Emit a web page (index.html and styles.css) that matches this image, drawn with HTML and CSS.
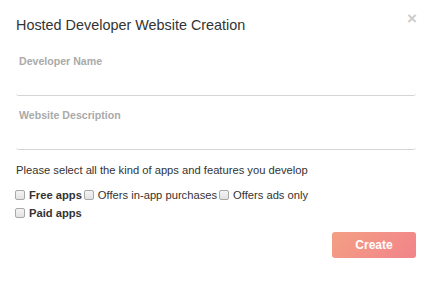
FILE: index.html
```html
<!DOCTYPE html>
<html lang="en">
<head>
    <meta charset="UTF-8">
    <meta name="viewport" content="width=device-width, initial-scale=1.0">
    <title>Hosted Developer Website Creation</title>
    <link rel="stylesheet" href="styles.css">
</head>
<body>
<div class="modal">
    <div class="modal-header">
        <p class="title">Hosted Developer Website Creation</p>
        <span class="close">&times;</span>
    </div>
    <form class="siteForm">
        <input type="text" class="field" placeholder="Developer Name">
        <input type="text" class="field" placeholder="Website Description">
        <p class="hint">Please select all the kind of apps and features you develop</p>
        <div class="options">
            <div class="row">
                <label class="opt strong"><input type="checkbox"> Free apps</label>
                <label class="opt"><input type="checkbox"> Offers in-app purchases</label>
                <label class="opt"><input type="checkbox"> Offers ads only</label>
            </div>
            <div class="row">
                <label class="opt strong"><input type="checkbox"> Paid apps</label>
            </div>
        </div>
        <div class="actions">
            <button type="submit" class="create">Create</button>
        </div>
    </form>
</div>
</body>
</html>
```

FILE: styles.css
```css
/* Global Reset */
* {
  box-sizing: border-box;
  margin: 0;
  padding: 0;
}

body {
  font-family: Arial, 'Liberation Sans', Helvetica, sans-serif;
  background: #fff;
  color: #333;
}

/* Modal */
.modal {
  width: 429px;
  padding: 15px 13px 0 16px;
}

.modal-header {
  display: flex;
  justify-content: space-between;
  align-items: flex-start;
  height: 30px;
}

.modal-header .title {
  font-size: 14.4px;
  line-height: 20px;
  color: #333;
}

.modal-header .close {
  font-size: 17px;
  line-height: 10px;
  font-weight: bold;
  color: #ccc;
  margin-right: -1px;
  margin-top: -1px;
}

/* Inputs */
.siteForm {
  display: flex;
  flex-direction: column;
}

.field {
  display: block;
  width: 100%;
  height: 51px;
  padding: 9px 3px 28px;
  border: none;
  border-bottom: 1px solid #d4d4d4;
  border-radius: 0 0 3px 3px;
  margin-bottom: 3px;
  font-family: inherit;
  font-size: 10.6px;
  font-weight: bold;
  line-height: 14px;
  color: #333;
  outline: none;
}

.field::placeholder {
  color: #aaa;
}

/* Checkboxes */
.hint {
  font-size: 11.2px;
  line-height: 14px;
  margin-top: 10px;
}

.options {
  margin-top: 9px;
}

.row {
  display: flex;
  gap: 3px;
}

.opt {
  font-size: 11.2px;
  line-height: 18px;
  display: flex;
  align-items: center;
  gap: 4px;
}

.opt.strong {
  font-weight: bold;
}

.opt input {
  appearance: none;
  width: 10px;
  height: 10px;
  margin-left: -1px;
  border: 1px solid #a8a8a8;
  border-radius: 2px;
  background: linear-gradient(#f4f4f4, #e2e2e2);
}

/* Create Button */
.actions {
  display: flex;
  justify-content: flex-end;
  margin-top: 10px;
}

button.create {
  width: 84px;
  height: 26px;
  border: none;
  border-radius: 3px;
  background: linear-gradient(135deg, #f3a084, #f2838a);
  color: #fff;
  font-family: inherit;
  font-size: 12px;
  font-weight: bold;
  cursor: pointer;
}
```
